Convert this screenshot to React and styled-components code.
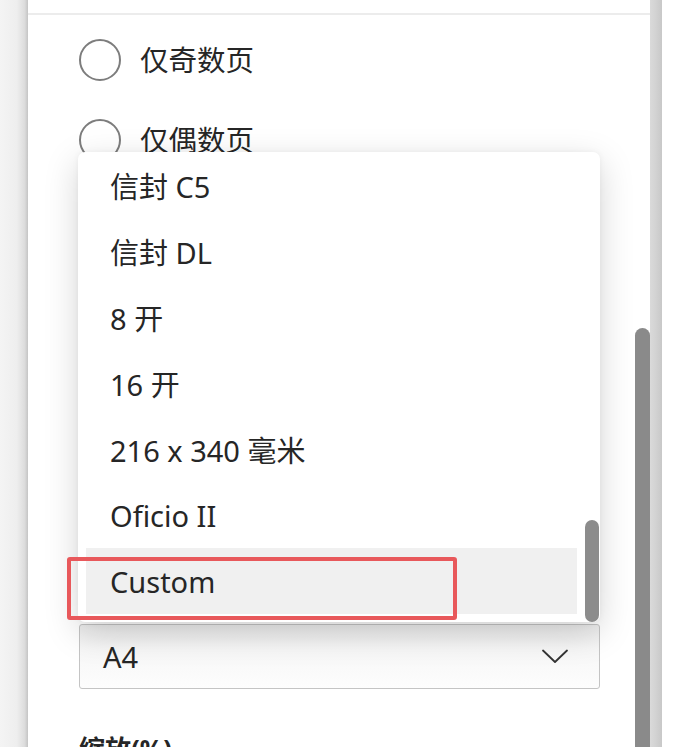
import styled, { createGlobalStyle } from 'styled-components';

// global
const GlobalStyle = createGlobalStyle`
    html, body {
        margin: 0;
        padding: 0;
        background: #ffffff;
        overflow: hidden;
    }
    body {
        font-family: "Noto Sans", "Noto Sans CJK SC", sans-serif;
        color: #262626;
    }
`;

const paperSizes = [
    '信封 C5',
    '信封 DL',
    '8 开',
    '16 开',
    '216 x 340 毫米',
    'Oficio II',
    'Custom',
];

function Chevron () {
    return (
        <svg width="26" height="15" viewBox="0 0 26 15" fill="none">
            <polyline
                points="1,1.5 13,13 25,1.5"
                stroke="#333333"
                strokeWidth="1.8"
                strokeLinejoin="round"
                strokeLinecap="round"
            />
        </svg>
    );
}

export default function App () {

    const selected = 'Custom';

    return (
        <StyledPage>
            <GlobalStyle />
            <LeftShade />
            <Panel>
                <TopBar />
                <Body>
                    <RadioRow>
                        <RadioCircle />
                        <RadioLabel>仅奇数页</RadioLabel>
                    </RadioRow>
                    <RadioRow>
                        <RadioCircle />
                        <RadioLabel>仅偶数页</RadioLabel>
                    </RadioRow>

                    {/* paper size select, its list is open above it */}
                    <Field $top={444}>
                        <Select>
                            <span>A4</span>
                            <Chevron />
                        </Select>
                    </Field>

                    <Field $top={42}>
                        <FieldLabel $bold>缩放(%)</FieldLabel>
                    </Field>
                </Body>
                <PanelScrollThumb />
            </Panel>
            <RightEdge />

            <Menu>
                <MenuList>
                    {
                        paperSizes.map((size, key) => {
                            return (
                                <MenuItem key={key} $active={size === selected}>
                                    {size}
                                </MenuItem>
                            )
                        })
                    }
                </MenuList>
                <MenuScrollThumb />
            </Menu>

            <Highlight />
        </StyledPage>
    )
}

const StyledPage = styled.div`
    position: relative;
    display: flex;
    width: 680px;
    height: 747px;
    overflow: hidden;
    background: #ffffff;
`;

const LeftShade = styled.div`
    flex: 0 0 28px;
    background: linear-gradient(to right, #f4f4f4 0%, #eeeeee 60%, #dcdcdc 88%, #c4c4c4 100%);
`;

const Panel = styled.div`
    position: relative;
    flex: 0 0 622px;
    display: flex;
    flex-direction: column;
    background: #ffffff;
    & > * {
        flex-shrink: 0;
    }
`;

const TopBar = styled.div`
    height: 13px;
    border-bottom: 2px solid #ececec;
`;

const Body = styled.div`
    display: flex;
    flex-direction: column;
    padding: 5px 50px 0 51px;
    & > * {
        flex-shrink: 0;
    }
`;

const RadioRow = styled.div`
    display: flex;
    align-items: center;
    gap: 19px;
    height: 80px;
`;

const RadioCircle = styled.span`
    box-sizing: border-box;
    width: 42px;
    height: 42px;
    border-radius: 50%;
    border: 2px solid #7d7d7d;
    background: #ffffff;
`;

const RadioLabel = styled.span`
    font-size: 28.5px;
    line-height: 1;
    color: #262626;
`;

const Field = styled.div`
    display: flex;
    flex-direction: column;
    gap: 10px;
    margin-top: ${props => props.$top}px;
`;

const FieldLabel = styled.div`
    height: 36px;
    line-height: 36px;
    font-size: 26px;
    font-weight: ${props => props.$bold ? 700 : 400};
    color: #262626;
`;

const Select = styled.div`
    box-sizing: border-box;
    display: flex;
    align-items: center;
    justify-content: space-between;
    height: 65px;
    padding: 0 31px 0 23px;
    border: 1px solid #c4c4c4;
    border-radius: 3px;
    background: linear-gradient(to bottom, #ececec 0%, #f7f7f7 40%, #fdfdfd 100%);
    font-size: 29px;
    color: #262626;
    span {
        line-height: 1;
    }
`;

const PanelScrollThumb = styled.div`
    position: absolute;
    right: 0;
    top: 328px;
    bottom: -10px;
    width: 15px;
    border-radius: 8px 8px 0 0;
    background: #8a8a8a;
`;

const RightEdge = styled.div`
    flex: 0 0 12px;
    background: linear-gradient(to right, #dadada 0%, #d2d2d2 50%, #c8c8c8 100%);
`;

const Menu = styled.div`
    position: absolute;
    left: 78px;
    top: 152px;
    width: 522px;
    height: 470px;
    border-radius: 7px;
    background: #ffffff;
    box-shadow: 0 10px 34px rgba(0, 0, 0, 0.17), 0 0 6px rgba(0, 0, 0, 0.05);
`;

const MenuList = styled.div`
    display: flex;
    flex-direction: column;
    padding: 0 23px 0 8px;
`;

const MenuItem = styled.div`
    display: flex;
    align-items: center;
    height: 66px;
    padding-left: 24px;
    font-size: 29px;
    color: #262626;
    background: ${props => props.$active ? '#f0f0f0' : 'transparent'};
`;

const MenuScrollThumb = styled.div`
    position: absolute;
    right: 1px;
    top: 368px;
    width: 14px;
    height: 102px;
    border-radius: 7px;
    background: #8c8c8c;
`;

const Highlight = styled.div`
    position: absolute;
    left: 67px;
    top: 557px;
    width: 390px;
    height: 63px;
    box-sizing: border-box;
    border: 4px solid #e8585b;
    border-radius: 3px;
`;
